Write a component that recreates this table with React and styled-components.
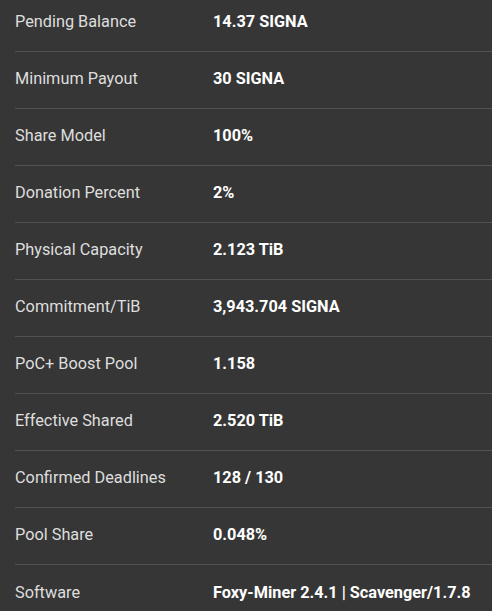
import styled, { createGlobalStyle } from 'styled-components'

const rows = [
	{ label: 'Pending Balance', value: '14.37 SIGNA' },
	{ label: 'Minimum Payout', value: '30 SIGNA' },
	{ label: 'Share Model', value: '100%' },
	{ label: 'Donation Percent', value: '2%' },
	{ label: 'Physical Capacity', value: '2.123 TiB' },
	{ label: 'Commitment/TiB', value: '3,943.704 SIGNA' },
	{ label: 'PoC+ Boost Pool', value: '1.158' },
	{ label: 'Effective Shared', value: '2.520 TiB' },
	{ label: 'Confirmed Deadlines', value: '128 / 130' },
	{ label: 'Pool Share', value: '0.048%' },
	{ label: 'Software', value: 'Foxy-Miner 2.4.1 | Scavenger/1.7.8' },
]

const GlobalStyle = createGlobalStyle`
	html, body {
		margin: 0;
		background: #363636;
		overflow: hidden;
	}
`

export default function App() {
	return (
		<>
			<GlobalStyle />
			<Table>
				{rows.map(row => (
					<Row key={row.label}>
						<Label>{row.label}</Label>
						<Value>{row.value}</Value>
					</Row>
				))}
			</Table>
		</>
	)
}

const Table = styled.div`
	margin-top: -5px;
	padding-left: 15px;
	font-family: Roboto, 'Liberation Sans', sans-serif;
	font-size: 16.3px;
`

const Row = styled.div`
	display: grid;
	grid-template-columns: 198px 1fr;
	align-items: center;
	box-sizing: border-box;
	height: 57px;
	padding-bottom: 3px;
	border-bottom: 1px solid #525252;

	&:last-child {
		border-bottom: none;
	}
`

const Label = styled.div`
	color: #dedede;
`

const Value = styled.div`
	color: #ffffff;
	font-weight: 700;
`
